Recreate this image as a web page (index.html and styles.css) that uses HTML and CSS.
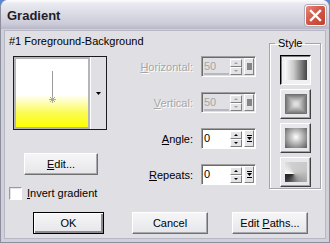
FILE: index.html
```html
<!DOCTYPE html>
<html lang="en">
<head>
    <meta charset="UTF-8">
    <title>Gradient</title>
    <link rel="stylesheet" href="styles.css">
</head>
<body>
    <div class="window">
        <div class="titlebar">
            <span class="title">Gradient</span>
            <button class="close">
                <svg width="13" height="13" viewBox="0 0 13 13"><path d="M2 2 L11 11 M11 2 L2 11" stroke="#fff" stroke-width="2.4" stroke-linecap="square"/></svg>
            </button>
        </div>

        <div class="client">
            <div class="main">
                <div class="left">
                    <div class="caption">#1 Foreground-Background</div>
                    <div class="picker">
                        <div class="swatch">
                            <div class="swatch-fill">
                                <svg class="marker" width="9" height="34" viewBox="0 0 9 34">
                                    <line x1="4.5" y1="0" x2="4.5" y2="27" stroke="#9a9a9a" stroke-width="1"/>
                                    <path d="M4.5 25 V32 M1 28.5 H8 M2 26 L7 31 M7 26 L2 31" stroke="#a8a8a8" stroke-width="1"/>
                                </svg>
                            </div>
                        </div>
                        <div class="drop">
                            <svg width="5" height="3" viewBox="0 0 5 3"><path d="M0 0 H5 L2.5 3 Z" fill="#000"/></svg>
                        </div>
                    </div>
                    <button class="btn edit"><u>E</u>dit...</button>
                    <label class="check"><span class="box"></span><span><u>I</u>nvert gradient</span></label>
                </div>

                <div class="fields">
                    <div class="row disabled">
                        <span class="label"><u>H</u>orizontal:</span>
                        <div class="spin">
                            <span class="val">50</span>
                            <span class="arrows"><span class="arr up"></span><span class="arr dn"></span></span>
                            <span class="slide"><span class="knob"></span></span>
                            <span class="bar" style="width:25px"></span>
                        </div>
                    </div>
                    <div class="row disabled">
                        <span class="label"><u>V</u>ertical:</span>
                        <div class="spin">
                            <span class="val">50</span>
                            <span class="arrows"><span class="arr up"></span><span class="arr dn"></span></span>
                            <span class="slide"><span class="knob"></span></span>
                            <span class="bar" style="width:25px"></span>
                        </div>
                    </div>
                    <div class="row">
                        <span class="label"><u>A</u>ngle:</span>
                        <div class="spin">
                            <span class="val">0</span>
                            <span class="arrows"><span class="arr up"></span><span class="arr dn"></span></span>
                            <span class="slide">
                                <svg width="5" height="7" viewBox="0 0 5 7"><path d="M0 0 H5 V1 H0 Z M0 2 H5 L2.5 5 Z M0 6 H5 V7 H0 Z" fill="#000"/></svg>
                            </span>
                        </div>
                    </div>
                    <div class="row">
                        <span class="label"><u>R</u>epeats:</span>
                        <div class="spin">
                            <span class="val">0</span>
                            <span class="arrows"><span class="arr up"></span><span class="arr dn"></span></span>
                            <span class="slide">
                                <svg width="5" height="7" viewBox="0 0 5 7"><path d="M0 0 H5 V1 H0 Z M0 2 H5 L2.5 5 Z M0 6 H5 V7 H0 Z" fill="#000"/></svg>
                            </span>
                        </div>
                    </div>
                </div>

                <fieldset class="style-group">
                    <legend>Style</legend>
                    <button class="style-btn pressed"><span class="ico linear"></span></button>
                    <button class="style-btn">
                        <svg class="ico" width="22" height="20" viewBox="0 0 22 20">
                            <defs>
                                <linearGradient id="gt" x1="0" y1="0" x2="0" y2="1"><stop offset="0" stop-color="#6a6a6a"/><stop offset="1" stop-color="#f8f8f8"/></linearGradient>
                                <linearGradient id="gb" x1="0" y1="1" x2="0" y2="0"><stop offset="0" stop-color="#6a6a6a"/><stop offset="1" stop-color="#f8f8f8"/></linearGradient>
                                <linearGradient id="gl" x1="0" y1="0" x2="1" y2="0"><stop offset="0" stop-color="#6a6a6a"/><stop offset="1" stop-color="#f8f8f8"/></linearGradient>
                                <linearGradient id="gr" x1="1" y1="0" x2="0" y2="0"><stop offset="0" stop-color="#6a6a6a"/><stop offset="1" stop-color="#f8f8f8"/></linearGradient>
                            </defs>
                            <rect width="22" height="20" fill="#9a9a9a"/>
                            <polygon points="0,0 22,0 11,10" fill="url(#gt)"/>
                            <polygon points="0,20 22,20 11,10" fill="url(#gb)"/>
                            <polygon points="0,0 0,20 11,10" fill="url(#gl)"/>
                            <polygon points="22,0 22,20 11,10" fill="url(#gr)"/>
                        </svg>
                    </button>
                    <button class="style-btn"><span class="ico radial"></span></button>
                    <button class="style-btn"><span class="ico conic"></span></button>
                </fieldset>
            </div>

            <div class="actions">
                <button class="btn ok">OK</button>
                <button class="btn">Cancel</button>
                <button class="btn">Edit <u>P</u>aths...</button>
            </div>
        </div>
    </div>
</body>
</html>
```

FILE: styles.css
```css
html, body {
    margin: 0;
    padding: 0;
    background-color: #5a86d6;
}
body {
    font-family: "Liberation Sans", Arial, sans-serif;
    font-size: 11px;
    color: #000;
}
.window {
    width: 330px;
    height: 243px;
    box-sizing: border-box;
    background-color: #e0dfe3;
    border-radius: 7px 7px 0 0;
    border: 1px solid #8e8f9e;
    border-top: none;
    overflow: hidden;
    display: flex;
    flex-direction: column;
}
.titlebar {
    height: 29px;
    flex: none;
    display: flex;
    align-items: center;
    justify-content: space-between;
    padding: 0 3px 0 6px;
    background: linear-gradient(#fdfdfe 0, #eaeaf1 12%, #dcdce6 45%, #cdcdda 80%, #b8b8c9 100%);
    border-radius: 7px 7px 0 0;
}
.title {
    font-weight: bold;
    font-size: 13px;
    color: #1e1e28;
    padding-top: 1px;
}
.close {
    width: 21px;
    height: 21px;
    padding: 0;
    margin-top: 2px;
    display: flex;
    align-items: center;
    justify-content: center;
    border: 1px solid #fff;
    border-radius: 3px;
    background: linear-gradient(135deg, #e88878 0, #d3594a 45%, #c0402f 100%);
    box-shadow: 0 0 0 1px #b0aeb8;
}
.client {
    flex: 1;
    border: 3px solid #d0d0da;
    border-top: 1px solid #d0d0da;
    box-shadow: inset 1px 1px 0 #b8b8c4, inset -1px -1px 0 #b8b8c4;
    padding: 5px 0 0 5px;
}
.main {
    display: flex;
    height: 171px;
}
.left {
    width: 130px;
    flex: none;
    display: flex;
    flex-direction: column;
    align-items: flex-start;
}
.caption {
    line-height: 13px;
    white-space: nowrap;
}
.picker {
    margin: 8px 0 0 4px;
    width: 94px;
    height: 74px;
    box-sizing: border-box;
    border: 1px solid #1c1c1c;
    display: flex;
}
.swatch {
    width: 76px;
    box-sizing: border-box;
    border: 2px solid #b4b4bc;
    background-color: #fff;
}
.swatch-fill {
    height: 100%;
    background: linear-gradient(#fff 0, #fff 52%, #fbfb50 80%, #ffff00 100%);
    display: flex;
    justify-content: center;
}
.marker {
    margin-top: 12px;
}
.drop {
    flex: 1;
    border-left: 1px solid #fff;
    display: flex;
    align-items: center;
    justify-content: center;
}
.btn {
    font-family: inherit;
    font-size: 11px;
    color: #000;
    padding: 0;
    height: 22px;
    box-sizing: border-box;
    background: linear-gradient(#f6f6f8, #e6e6ea);
    border: 1px solid;
    border-color: #fff #707070 #707070 #fff;
    box-shadow: inset -1px -1px 0 #a8a8b0;
}
.edit {
    width: 74px;
    margin: 23px 0 0 15px;
}
.check {
    margin-top: 12px;
    display: flex;
    align-items: center;
    gap: 5px;
    line-height: 13px;
}
.box {
    width: 13px;
    height: 13px;
    box-sizing: border-box;
    background-color: #fff;
    border: 1px solid;
    border-color: #9a9aa2 #fff #fff #9a9aa2;
    box-shadow: inset 1px 1px 0 #e4e4e8;
}
.fields {
    width: 117px;
    flex: none;
    padding-top: 21px;
    display: flex;
    flex-direction: column;
    gap: 15px;
}
.row {
    display: flex;
    align-items: center;
    justify-content: flex-end;
    gap: 8px;
}
.label {
    white-space: nowrap;
}
.row.disabled .label {
    color: #a6a6a6;
    text-shadow: 1px 1px 0 #fff;
}
.spin {
    position: relative;
    width: 55px;
    height: 21px;
    box-sizing: border-box;
    background-color: #fff;
    border: 1px solid;
    border-color: #a0a0a0 #fff #fff #a0a0a0;
    box-shadow: inset 1px 1px 0 #6a6a6a;
    display: flex;
    align-items: center;
    padding: 1px 1px 1px 2px;
}
.row.disabled .spin {
    background-color: #e0dfe3;
    color: #a6a6a6;
}
.val {
    width: 26px;
    line-height: 17px;
    align-self: flex-start;
}
.arrows {
    width: 12px;
    height: 16px;
    display: flex;
    flex-direction: column;
}
.arr {
    flex: 1;
    box-sizing: border-box;
    background-color: #e4e4e8;
    border: 1px solid;
    border-color: #fff #808080 #808080 #fff;
    position: relative;
}
.arr::after {
    content: "";
    position: absolute;
    left: 3px;
    top: 2px;
    border-left: 2px solid transparent;
    border-right: 2px solid transparent;
}
.up::after {
    border-bottom: 2px solid #000;
}
.dn::after {
    border-top: 2px solid #000;
}
.row.disabled .up::after {
    border-bottom-color: #a0a0a0;
}
.row.disabled .dn::after {
    border-top-color: #a0a0a0;
}
.slide {
    width: 10px;
    height: 17px;
    margin-left: 2px;
    box-sizing: border-box;
    background-color: #e4e4e8;
    border: 1px solid;
    border-color: #fff #808080 #808080 #fff;
    display: flex;
    align-items: center;
    justify-content: center;
}
.knob {
    width: 5px;
    height: 7px;
    background-color: #858585;
}
.bar {
    position: absolute;
    left: 2px;
    bottom: 1px;
    height: 2px;
    background-color: #b8b8c0;
}
.style-group {
    margin: 2px 0 0 13px;
    padding: 5px 9px 9px 10px;
    width: 52px;
    box-sizing: border-box;
    height: 152px;
    border: 1px solid #a4a4aa;
    box-shadow: inset 1px 1px 0 #fff, 1px 1px 0 #fff;
    display: flex;
    flex-direction: column;
    gap: 4px;
}
.style-group legend {
    padding: 0 3px;
    margin-left: -5px;
    line-height: 13px;
}
.style-btn {
    width: 31px;
    height: 30px;
    padding: 0;
    flex: none;
    box-sizing: border-box;
    background-color: #e8e8ec;
    border: 1px solid;
    border-color: #fff #404040 #404040 #fff;
    box-shadow: inset -1px -1px 0 #a0a0a8;
    display: flex;
    align-items: center;
    justify-content: center;
}
.style-btn.pressed {
    border-color: #000 #fff #fff #000;
    box-shadow: inset 1px 1px 0 #808080;
    background-color: #f0f0f2;
}
.ico {
    display: block;
    width: 22px;
    height: 20px;
}
.linear {
    background: linear-gradient(to right, #fafafa 0, #c8c8c8 40%, #444 100%);
}
.radial {
    background: radial-gradient(circle at 50% 45%, #fff 0, #c4c4c4 35%, #5a5a5a 100%);
}
.conic {
    background: conic-gradient(from 270deg at 40% 58%, #fdfdfd 0, #d0d0d0 20%, #c8c8c8 45%, #9a9a9a 65%, #333 90%, #222 100%);
}
.actions {
    display: flex;
    padding: 6px 0 0 24px;
}
.actions .btn {
    width: 76px;
}
.actions .btn + .btn {
    margin-left: 24px;
}
.actions .ok {
    width: 71px;
    margin-right: 4px;
    border: 1px solid #000;
    box-shadow: inset 1px 1px 0 #fff, inset -2px -2px 0 #8a8a92;
}
```
